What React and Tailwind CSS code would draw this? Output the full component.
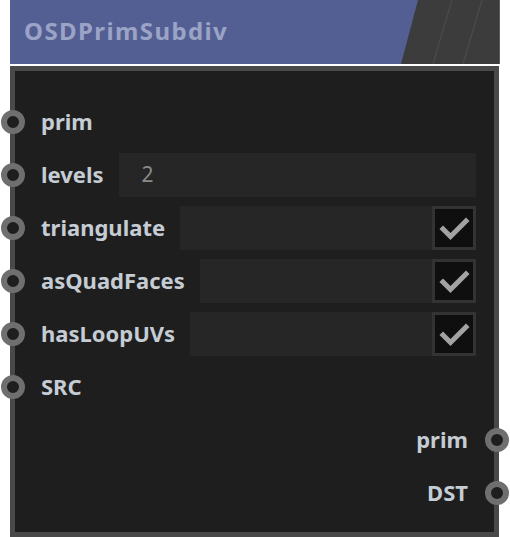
import React from "react";

const inputs = [
  { name: "prim" },
  { name: "levels", value: "2" },
  { name: "triangulate", check: true },
  { name: "asQuadFaces", check: true },
  { name: "hasLoopUVs", check: true },
  { name: "SRC" },
];

const outputs = ["prim", "DST"];

const Port = ({ side }) => (
  <span
    className={`absolute top-1/2 -translate-y-1/2 w-[24px] h-[24px] rounded-full border-[6px] border-[#6f6f6f] bg-[#1e1e1e] ${
      side === "left" ? "left-[-14px]" : "right-[-15px]"
    }`}
  />
);

const Check = () => (
  <div className="w-[44px] h-full border-[3px] border-[#333333] bg-[#0f0f0f] flex items-center justify-center">
    <svg width="38" height="38" viewBox="0 0 38 38">
      <path d="M8 20 L15.5 27.5 L31 12" fill="none" stroke="#a3a3a3" strokeWidth="5" strokeLinecap="square" />
    </svg>
  </div>
);

export default function App() {
  return (
    <div
      className="w-[510px] h-[537px] bg-white overflow-hidden"
      style={{ fontFamily: '"Noto Sans", "Open Sans", sans-serif' }}
    >
      <header className="relative ml-[10px] w-[490px] h-[64px] bg-[#535f93] flex items-center pl-[14px] pb-[3px] overflow-hidden">
        <h1 className="text-[24px] font-bold text-[#9ba3c6] tracking-[1.4px]">OSDPrimSubdiv</h1>
        <svg className="absolute right-0 top-0" width="100" height="64" viewBox="0 0 100 64">
          <polygon points="18,0 100,0 100,64 1,64" fill="#3c3c3c" />
          <line x1="52" y1="0" x2="33" y2="64" stroke="#4b4b4b" strokeWidth="1.2" />
          <line x1="82" y1="0" x2="63" y2="64" stroke="#4b4b4b" strokeWidth="1.2" />
          <line x1="99.5" y1="0" x2="99.5" y2="64" stroke="#5a5a5a" strokeWidth="1" />
        </svg>
      </header>

      <section className="mt-[2px] ml-[10px] w-[489px] h-[471px] border-[5px] border-[#494949] bg-[#1e1e1e] pt-[29px] flex flex-col gap-[9px]">
        {inputs.map((p, i) => (
          <div key={i} className="relative h-[44px] flex items-center pl-[26px] pr-[18px]">
            <Port side="left" />
            <span className="relative -top-[1px] text-[22px] font-bold text-[#c5ccd4] leading-none">{p.name}</span>
            {p.value !== undefined && (
              <div className="ml-[15px] flex-1 h-full bg-[#262626] flex items-center pl-[23px] text-[21px] text-[#8b8b8b]">
                {p.value}
              </div>
            )}
            {p.check && (
              <div className="ml-[15px] flex-1 h-full flex">
                <div className="flex-1 bg-[#262626]" />
                <Check />
              </div>
            )}
          </div>
        ))}
        {outputs.map((o, i) => (
          <div key={i} className="relative h-[44px] flex items-center justify-end pr-[26px]">
            <span className="relative -top-[1px] text-[22px] font-bold text-[#c5ccd4] leading-none">{o}</span>
            <Port side="right" />
          </div>
        ))}
      </section>
    </div>
  );
}
